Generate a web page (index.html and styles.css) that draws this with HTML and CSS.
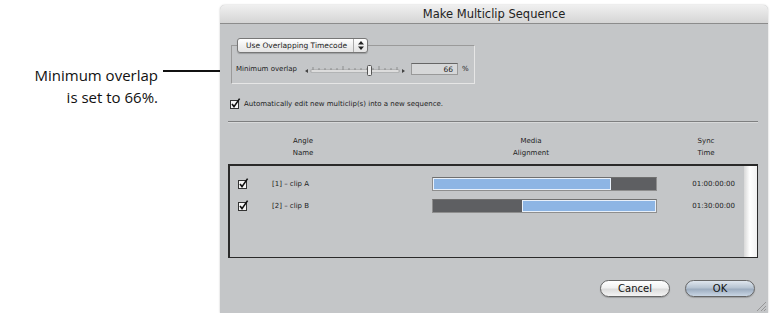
FILE: index.html
```html
<!DOCTYPE html>
<html lang="en">
  <head>
    <meta charset="UTF-8" />
    <title>Make Multiclip Sequence</title>
    <link rel="stylesheet" href="styles.css">
  </head>
  <body>
    <div class="page">
      <div class="callout">
        <p>Minimum overlap<br />is set to 66%.</p>
        <span class="leader"></span>
      </div>
      <div class="dialog">
        <div class="titlebar">Make Multiclip Sequence</div>
        <div class="content">
          <fieldset class="group">
            <legend>
              <span class="popup">
                <span class="popup-label">Use Overlapping Timecode</span>
                <span class="stepper">
                  <svg width="6" height="9" viewBox="0 0 6 9">
                    <path d="M3 0 L6 3.5 L0 3.5 Z M3 9 L6 5.5 L0 5.5 Z" fill="#222" />
                  </svg>
                </span>
              </span>
            </legend>
            <div class="slider-row">
              <span class="slider-label">Minimum overlap</span>
              <svg class="slider" width="100" height="14" viewBox="0 0 100 14">
                <path d="M0 9 L3 7 L3 11 Z M100 9 L97 7 L97 11 Z" fill="#444" />
                <rect x="6" y="8" width="88" height="2" fill="#fff" stroke="#8a8a8a" stroke-width="0.6" />
                <g stroke="#777" stroke-width="0.7">
                  <path d="M8 5 V8 M14 6 V8 M20 6 V8 M26 6 V8 M32 6 V8 M38 4 V8 M44 6 V8 M50 6 V8 M56 6 V8 M62 6 V8 M68 6 V8 M74 4 V8 M80 6 V8 M86 6 V8 M92 5 V8" />
                </g>
                <rect x="62.5" y="3.5" width="4" height="10" rx="1" fill="#eee" stroke="#555" />
              </svg>
              <span class="field">66</span>
              <span class="unit">%</span>
            </div>
          </fieldset>

          <label class="check-row">
            <svg class="check" width="11" height="11" viewBox="0 0 11 11">
              <rect x="0.5" y="2.5" width="8" height="8" fill="#f6f6f6" stroke="#333" />
              <path d="M2 6 L4 8.6 L9.6 0.6" fill="none" stroke="#111" stroke-width="1.6" />
            </svg>
            <span>Automatically edit new multiclip(s) into a new sequence.</span>
          </label>

          <div class="separator"></div>

          <div class="columns">
            <span>Angle<br />Name</span>
            <span>Media<br />Alignment</span>
            <span>Sync<br />Time</span>
          </div>

          <div class="list">
            <div class="rows">
              <div class="row">
                <svg class="check" width="11" height="11" viewBox="0 0 11 11">
                  <rect x="0.5" y="2.5" width="8" height="8" fill="#f6f6f6" stroke="#333" />
                  <path d="M2 6 L4 8.6 L9.6 0.6" fill="none" stroke="#111" stroke-width="1.6" />
                </svg>
                <span class="name">[1] – clip A</span>
                <div class="bar">
                  <span class="media" style="width: 80%"></span>
                  <span class="gap"></span>
                </div>
                <span class="time">01:00:00:00</span>
              </div>
              <div class="row">
                <svg class="check" width="11" height="11" viewBox="0 0 11 11">
                  <rect x="0.5" y="2.5" width="8" height="8" fill="#f6f6f6" stroke="#333" />
                  <path d="M2 6 L4 8.6 L9.6 0.6" fill="none" stroke="#111" stroke-width="1.6" />
                </svg>
                <span class="name">[2] – clip B</span>
                <div class="bar">
                  <span class="gap" style="width: 40%"></span>
                  <span class="media"></span>
                </div>
                <span class="time">01:30:00:00</span>
              </div>
            </div>
            <div class="scrollbar"></div>
          </div>

          <div class="buttons">
            <button class="btn">Cancel</button>
            <button class="btn btn-default">OK</button>
          </div>
        </div>
        <svg class="grip" width="11" height="11" viewBox="0 0 11 11">
          <path d="M10 1 L1 10 M10 5 L5 10 M10 8 L8 10" stroke="#8a8a8a" stroke-width="0.8" />
        </svg>
      </div>
    </div>
  </body>
</html>
```

FILE: styles.css
```css
:root {
  --color-panel: #c4c6c8;
  --color-text: #222;
  --color-blue: #8db5e4;
  --color-dark: #5e5f62;
}

body {
  margin: 0;
  background-color: #fff;
  font-family: "DejaVu Sans", sans-serif;
  color: var(--color-text);
}

.page {
  position: relative;
  display: flex;
  padding-top: 5px;
}

/* callout on the left */
.callout {
  width: 220px;
  flex: none;
}
.callout p {
  margin: 59px 62px 0 0;
  text-align: right;
  font-family: "Open Sans", sans-serif;
  font-size: 15px;
  line-height: 22px;
  color: #111;
}
.leader {
  position: absolute;
  left: 163px;
  top: 70px;
  width: 71px;
  height: 1.5px;
  background: #111;
}

/* dialog */
.dialog {
  position: relative;
  width: 548px;
  height: 308px;
  background: var(--color-panel);
  border-radius: 5px 5px 0 0;
  box-shadow: 0 0 2px rgba(0, 0, 0, 0.25);
  display: flex;
  flex-direction: column;
}

.titlebar {
  height: 18px;
  line-height: 18px;
  text-align: center;
  font-size: 11.5px;
  border-radius: 5px 5px 0 0;
  background: linear-gradient(#f0f0f0, #d5d5d5);
  border-bottom: 1px solid #8c8c8c;
}

.content {
  padding: 14px 10px 0 8px;
  font-size: 7px;
}

/* overlap group */
.group {
  width: 238px;
  margin: 0 0 0 3px;
  padding: 0 0 6px 4px;
  border: 1px solid #9a9a9a;
  border-right-color: #e6e6e6;
  border-bottom-color: #e6e6e6;
}
.group legend {
  margin-left: 1px;
  padding: 0;
}

.popup {
  display: flex;
  align-items: stretch;
  height: 15px;
  width: 131px;
  background: linear-gradient(#ffffff, #f0f0f0 50%, #e4e4e4);
  border: 1px solid #777;
  border-radius: 3px;
  box-sizing: border-box;
  box-shadow: 0 1px 1px rgba(0, 0, 0, 0.2);
  font-size: 7.5px;
}
.popup-label {
  flex: 1;
  padding-left: 8px;
  line-height: 13px;
}
.stepper {
  width: 13px;
  display: flex;
  align-items: center;
  justify-content: center;
  border-left: 1px solid #aaa;
}

.slider-row {
  display: flex;
  align-items: center;
  height: 16px;
  margin-top: 8px;
}
.slider-label {
  width: 69px;
}
.slider {
  margin-right: 6px;
}
.field {
  width: 47px;
  height: 12px;
  box-sizing: border-box;
  padding-right: 4px;
  text-align: right;
  line-height: 11px;
  background: #d6d7d8;
  border: 1px solid #999;
  border-top-color: #666;
  font-size: 7.5px;
}
.unit {
  margin-left: 4px;
}

/* checkbox option */
.check-row {
  display: flex;
  align-items: center;
  gap: 3px;
  height: 13px;
  margin: 13px 0 0 2px;
}

.separator {
  height: 1px;
  margin: 11px 0 0 0;
  background: #7e7f80;
  border-bottom: 1px solid #d8d9da;
}

/* column heads */
.columns {
  display: grid;
  grid-template-columns: 150px 306px 44px;
  text-align: center;
  line-height: 12px;
  margin-top: 12px;
}

/* clip list */
.list {
  display: flex;
  height: 94px;
  margin-top: 5px;
  box-sizing: border-box;
  border: 1px solid #2a2a2a;
  border-top-width: 2px;
  border-left-width: 2px;
}
.rows {
  flex: 1;
  padding: 7px 0 0 8px;
}
.row {
  display: grid;
  grid-template-columns: 34px 160px 225px 78px;
  align-items: center;
  height: 22px;
}
.row .check {
  margin-top: -2px;
}
.bar {
  display: flex;
  height: 14px;
  box-sizing: border-box;
  border: 1px solid #8e8e8e;
  border-top-color: #6f6f6f;
  background: var(--color-blue);
}
.bar .media {
  flex: 1;
  background: var(--color-blue);
  box-shadow: inset 0 0 0 1px #e8f0fa;
}
.bar .gap {
  flex: 1;
  background: var(--color-dark);
}
.bar .media[style],
.bar .gap[style] {
  flex: none;
}
.time {
  text-align: right;
}
.scrollbar {
  width: 13px;
  background: linear-gradient(90deg, #d8d8d8, #ffffff 45%, #f2f2f2);
}

/* buttons */
.buttons {
  display: flex;
  justify-content: flex-end;
  gap: 15px;
  margin-top: 22px;
  padding-right: 3px;
}
.btn {
  width: 70px;
  height: 17px;
  padding: 0;
  border: 1px solid #666;
  border-radius: 9px;
  font-family: "DejaVu Sans", sans-serif;
  font-size: 10px;
  color: #111;
  background: linear-gradient(#ffffff, #f1f1f1 45%, #dcdcdc 55%, #f4f4f4);
  box-shadow: 0 1px 1px rgba(0, 0, 0, 0.2);
}
.btn-default {
  background: linear-gradient(#dfe6ee, #b7c4d2 45%, #9dadc0 55%, #c9d6e4);
}

.grip {
  position: absolute;
  right: 1px;
  bottom: 1px;
}
```
